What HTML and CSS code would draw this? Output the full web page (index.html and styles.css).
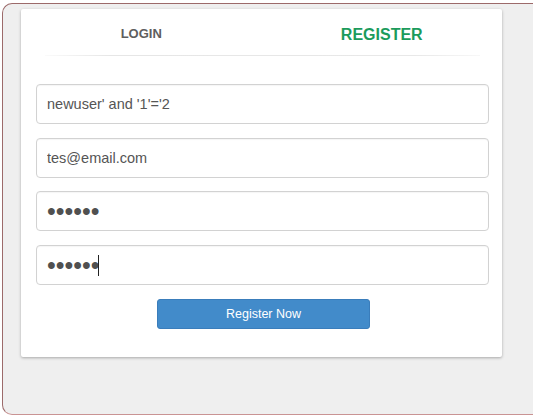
FILE: index.html
```html
<!DOCTYPE html>
<html>
<head>
<meta charset="utf-8">
<link rel="stylesheet" href="styles.css">
</head>
<body>
<div class="frame">
  <div class="card">
    <div class="tabs">
      <div class="tab">LOGIN</div>
      <div class="tab active">REGISTER</div>
    </div>
    <div class="rule"></div>
    <form class="form">
      <input class="field" type="text" value="newuser' and '1'='2">
      <input class="field" type="text" value="tes@email.com">
      <input class="field pw first-pw" type="password" value="123456">
      <div class="wrap">
        <input class="field pw" type="password" value="123456">
        <span class="caret"></span>
      </div>
      <div class="actions">
        <button type="button" class="btn">Register Now</button>
      </div>
    </form>
  </div>
</div>
</body>
</html>
```
FILE: styles.css
```css
html, body {
  margin: 0;
  padding: 0;
  background: #ffffff;
  font-family: "Liberation Sans", Arial, sans-serif;
}
.frame {
  margin: 3px 0 0 2px;
  height: 412px;
  box-sizing: border-box;
  border: 1px solid #9c6a6a;
  border-right: none;
  border-bottom-color: #c99393;
  border-radius: 10px 0 0 10px;
  background: #efefef;
  padding: 5px 0 0 18px;
}
.card {
  width: 481px;
  height: 348px;
  box-sizing: border-box;
  background: #fff;
  border-radius: 2px;
  box-shadow: 0 1px 3px rgba(0,0,0,0.3);
}
.tabs {
  display: grid;
  grid-template-columns: 1fr 1fr;
  height: 46px;
  align-items: center;
}
.tab {
  text-align: center;
  font-weight: bold;
  font-size: 13px;
  color: #5e5e5e;
  padding-top: 2px;
}
.tab.active {
  font-size: 16px;
  color: #1b9b5c;
  padding-top: 6px;
}
.rule {
  height: 1px;
  margin: 0 22px 0 24px;
  background: linear-gradient(to right, rgba(230,230,230,0.2), #e6e6e6 15%, #e8e8e8 85%, rgba(230,230,230,0.3));
}
.form {
  display: flex;
  flex-direction: column;
  gap: 14px;
  padding: 28px 13px 0 15px;
  margin: 0;
}
.field {
  display: block;
  width: 453px;
  height: 40px;
  box-sizing: border-box;
  border: 1px solid #d2d2d2;
  border-radius: 4px;
  padding: 0 10px;
  font-family: "Liberation Sans", Arial, sans-serif;
  font-size: 14.5px;
  color: #555;
  background: #fff;
  outline: none;
  box-shadow: inset 0 1px 1px rgba(0,0,0,0.04);
  margin: 0;
}
.field.pw {
  font-size: 25px;
  color: #505050;
}
.field.first-pw {
  margin-top: -1px;
}
.wrap {
  position: relative;
}
.caret {
  position: absolute;
  left: 62px;
  top: 10px;
  width: 1px;
  height: 21px;
  background: #222;
}
.actions {
  display: flex;
  justify-content: center;
}
.btn {
  width: 213px;
  height: 30px;
  margin-left: 2px;
  border: 1px solid #3a7dbb;
  border-radius: 3px;
  background: #428bca;
  color: #fff;
  font-family: "Liberation Sans", Arial, sans-serif;
  font-size: 12.5px;
  padding: 0;
}
```
